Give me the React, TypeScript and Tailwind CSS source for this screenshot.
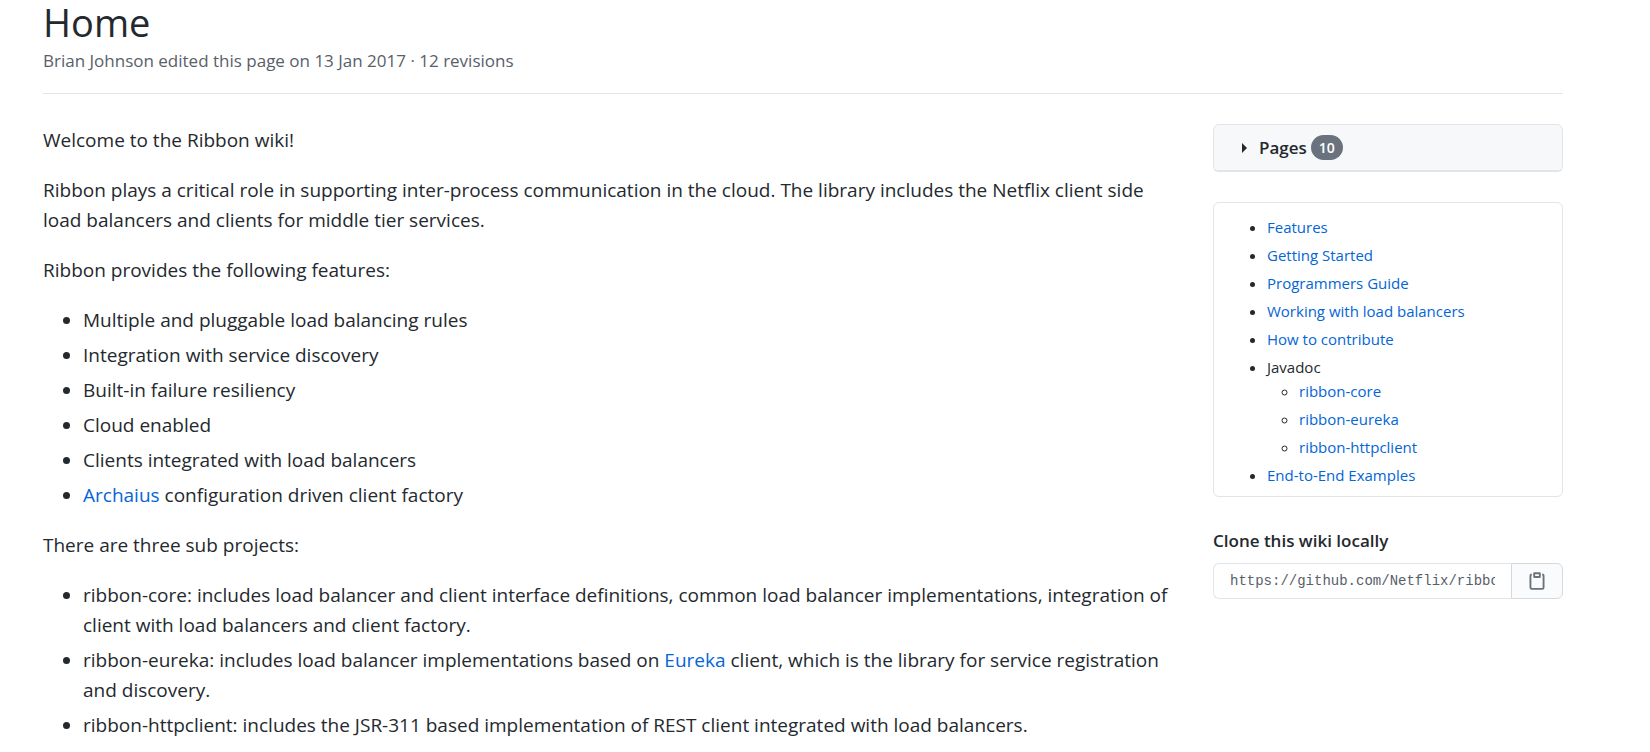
import { useState } from "react";

const features = [
  "Multiple and pluggable load balancing rules",
  "Integration with service discovery",
  "Built-in failure resiliency",
  "Cloud enabled",
  "Clients integrated with load balancers",
];

const guides = [
  "Features",
  "Getting Started",
  "Programmers Guide",
  "Working with load balancers",
  "How to contribute",
];

const javadocs = ["ribbon-core", "ribbon-eureka", "ribbon-httpclient"];

const cloneUrl = "https://github.com/Netflix/ribbon.wiki.git";

function WikiLink({ children }: { children: React.ReactNode }) {
  return (
    <a href="#" className="text-[#0366d6] hover:underline">
      {children}
    </a>
  );
}

function ClippyIcon() {
  return (
    <svg viewBox="0 0 16 16" className="w-5 h-5 fill-[#6a737d]" aria-hidden="true">
      <path
        fillRule="evenodd"
        d="M5.75 1a.75.75 0 00-.75.75v3c0 .414.336.75.75.75h4.5a.75.75 0 00.75-.75v-3a.75.75 0 00-.75-.75h-4.5zm.75 3V2.5h3V4h-3zm-2.874-.467a.75.75 0 00-.752-1.298A1.75 1.75 0 002 3.75v9.5c0 .966.784 1.75 1.75 1.75h8.5A1.75 1.75 0 0014 13.25v-9.5a1.75 1.75 0 00-.874-1.515.75.75 0 10-.752 1.298.25.25 0 01.126.217v9.5a.25.25 0 01-.25.25h-8.5a.25.25 0 01-.25-.25v-9.5a.25.25 0 01.126-.217z"
      />
    </svg>
  );
}

function Sidebar() {
  const [open, setOpen] = useState(false);

  return (
    <aside className="w-[350px] shrink-0">
      <div className="rounded-md border border-[#e1e4e8] bg-[#f6f8fa]">
        <button
          type="button"
          aria-expanded={open}
          onClick={() => setOpen(!open)}
          className="flex w-full items-center border-b border-[#e1e4e8] h-[46px] pl-7 text-left text-[17px] font-semibold leading-6"
        >
          <svg viewBox="0 0 5 10" className="w-[5px] h-[10px] mr-3 fill-[#24292e]" aria-hidden="true">
            <path d="M0 0l5 5-5 5z" />
          </svg>
          Pages
          <span className="ml-1 rounded-full bg-[#6a737d] px-2 text-[14px] leading-[25px] text-white">
            10
          </span>
        </button>
      </div>

      <nav className="mt-[30px] rounded-md border border-[#e1e4e8] pt-3 pb-[9px] pl-[53px] pr-5 text-[15px] leading-6">
        <ul className="list-disc space-y-1">
          {guides.map((guide) => (
            <li key={guide}>
              <WikiLink>{guide}</WikiLink>
            </li>
          ))}
          <li>
            Javadoc
            <ul className="list-[circle] space-y-1 pl-8">
              {javadocs.map((name) => (
                <li key={name}>
                  <WikiLink>{name}</WikiLink>
                </li>
              ))}
            </ul>
          </li>
          <li>
            <WikiLink>End-to-End Examples</WikiLink>
          </li>
        </ul>
      </nav>

      <label htmlFor="clone-url" className="mt-8 block text-[17px] font-semibold leading-6">
        Clone this wiki locally
      </label>
      <div className="mt-[10px] flex h-9">
        <div className="flex min-w-0 flex-1 rounded-l-md border border-r-0 border-[#e1e4e8] px-4">
          <input
            id="clone-url"
            type="text"
            readOnly
            value={cloneUrl}
            className="min-w-0 flex-1 bg-transparent font-['Liberation_Mono',monospace] text-[14px] text-[#586069] outline-none"
          />
        </div>
        <button
          type="button"
          aria-label="Copy to clipboard"
          onClick={() => navigator.clipboard.writeText(cloneUrl)}
          className="flex w-[52px] items-center justify-center rounded-r-md border border-[#d6d9dc] bg-[#fafbfc]"
        >
          <ClippyIcon />
        </button>
      </div>
    </aside>
  );
}

export default function App() {
  return (
    <div className="bg-white pl-[43px] pr-[87px] font-['Open_Sans','Noto_Sans',sans-serif] text-[#24292e]">
      <header className="border-b border-[#e1e4e8] pb-[15px]">
        <h1 className="text-[38px] leading-[44px]">Home</h1>
        <p className="text-[17px] leading-[34px] text-[#586069]">
          Brian Johnson edited this page on 13 Jan 2017 · 12 revisions
        </p>
      </header>

      <div className="mt-[30px] flex gap-10">
        <main className="min-w-0 flex-1 space-y-5 pt-px text-[19px] leading-[30px]">
          <p>Welcome to the Ribbon wiki!</p>
          <p>
            Ribbon plays a critical role in supporting inter-process communication in the cloud. The
            library includes the Netflix client side load balancers and clients for middle tier
            services.
          </p>
          <p>Ribbon provides the following features:</p>
          <ul className="list-disc space-y-[5px] pl-10">
            {features.map((feature) => (
              <li key={feature}>{feature}</li>
            ))}
            <li>
              <WikiLink>Archaius</WikiLink> configuration driven client factory
            </li>
          </ul>
          <p>There are three sub projects:</p>
          <ul className="list-disc space-y-[5px] pl-10">
            <li>
              ribbon-core: includes load balancer and client interface definitions, common load
              balancer implementations, integration of client with load balancers and client
              factory.
            </li>
            <li>
              ribbon-eureka: includes load balancer implementations based on{" "}
              <WikiLink>Eureka</WikiLink> client, which is the library for service registration and
              discovery.
            </li>
            <li>
              ribbon-httpclient: includes the JSR-311 based implementation of REST client integrated
              with load balancers.
            </li>
          </ul>
        </main>
        <Sidebar />
      </div>
    </div>
  );
}
